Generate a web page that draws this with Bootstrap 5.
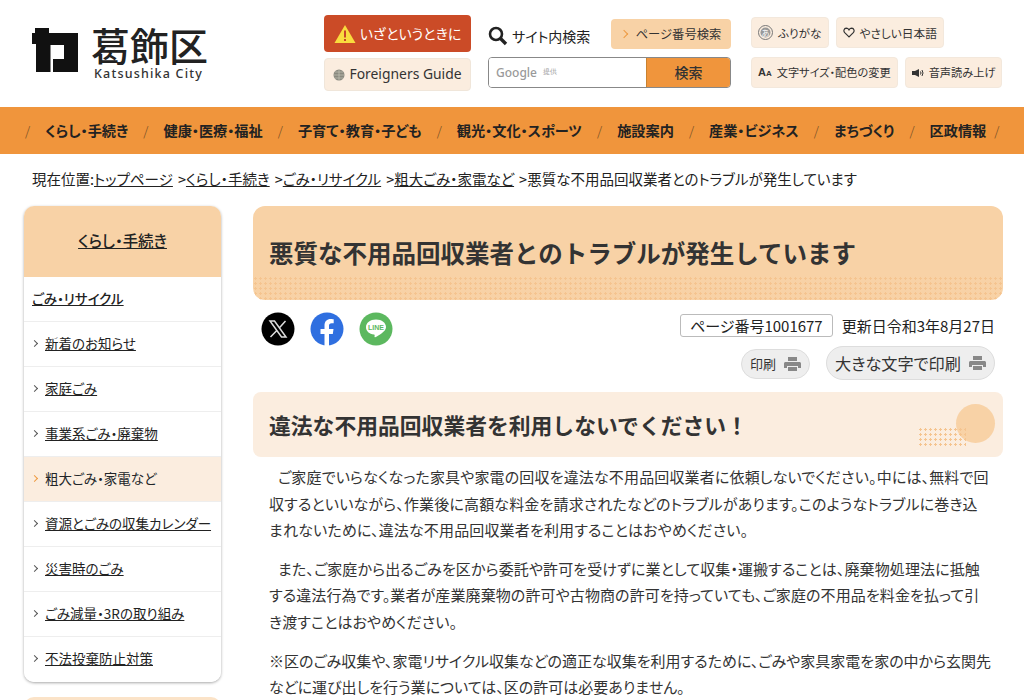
<!DOCTYPE html>
<html lang="ja">
<head>
<meta charset="UTF-8">
<meta name="viewport" content="width=device-width, initial-scale=1.0">
<title>悪質な不用品回収業者とのトラブルが発生しています</title>
<link href="https://cdn.jsdelivr.net/npm/bootstrap@5.3.0/dist/css/bootstrap.min.css" rel="stylesheet">
<style>
body { font-family: "Noto Sans CJK JP", "Noto Sans", sans-serif; font-feature-settings: "palt"; color: #222; font-size: 15px; background: #fff; }
a { color: #222; }
.site-head { height: 107px; padding: 15px 20px 0 32px; }
.logo-box { width: 292px; }
.logo-mark { margin-top: 13px; flex: none; }
.logo-kanji { font-size: 39px; line-height: 40px; font-weight: 500; color: #222; margin: 9px 0 0 13px; }
.logo-en { font-family: "Noto Sans", sans-serif; font-size: 12.5px; line-height: 14px; letter-spacing: 1.2px; color: #333; text-align: center; margin: 3px 0 0 11px; font-weight: 500; white-space: nowrap; }
.col-a { width: 147px; }
.col-b { width: 243px; margin-left: 17px; }
.col-c { margin-left: 20px; width: 253px; }
.btn-alert { background: #cb4b27; color: #fff; height: 37px; border-radius: 4px; font-size: 14px; }
.btn-foreign { background: #fbeddf; border: 1px solid #f0e6da; height: 33px; margin-top: 6px; border-radius: 4px; font-family: "Noto Sans", sans-serif; font-size: 13.9px; color: #333; }
.search-label { font-size: 14px; }
.btn-pageno { background: #f8d2a6; border-radius: 4px; height: 30px; width: 120px; font-size: 12.3px; color: #333; margin-top: 4px; }
.pageno-arrow { width: 6px; height: 6px; border-top: 1px solid #ee9a40; border-right: 1px solid #ee9a40; transform: rotate(45deg); margin-right: 9px; }
.search-box { height: 31px; border: 1px solid #888; border-radius: 4px; overflow: hidden; margin-top: 8px; }
.search-field { flex: 1; background: #fff; color: #999; font-family: "Noto Sans", sans-serif; font-size: 12px; font-weight: 500; padding-left: 7px; }
.search-field small { font-size: 7px; margin-left: 6px; }
.search-go { width: 84px; background: #f0953c; font-size: 14px; font-weight: 500; color: #333; border-left: 1px solid #c9822f; }
.btn-tool { background: #fbeddf; border: 1px solid #f3e8dc; border-radius: 4px; height: 31px; font-size: 11.7px; color: #333; padding: 0 6px; white-space: nowrap; gap: 5px; }
.btn-tool-sm { font-size: 11.2px; }
.tool-row-a { margin-top: 2px; gap: 7px; }
.tool-row-b { margin-top: 9px; gap: 7px; }
.tool-aa { font-weight: 700; font-family: "Liberation Sans", sans-serif; font-size: 11px; }
.tool-aa small { font-size: 8px; font-weight: 700; }
.main-nav { background: #f0953c; height: 47px; font-size: 14.2px; font-weight: 700; padding-left: 25px; flex-wrap: nowrap; white-space: nowrap; }
.main-nav .nav-item { margin-right: 15px; }
.main-nav .nav-item::before { content: "/"; font-weight: 300; color: #6b4a25; margin-right: 15px; font-size: 13px; }
.main-nav .nav-item:last-child::after { content: "/"; font-weight: 300; color: #6b4a25; margin-left: 8px; font-size: 13px; }
.main-nav .nav-item a { color: #222; text-decoration: none; }
.crumbs { padding: 15px 32px 0; height: 52px; font-size: 14.5px; line-height: 20px; }
.crumbs a { margin-right: 5px; }
.page-body { padding: 0 20px 0 24px; gap: 32px; }
.side-box { width: 197px; flex: none; border-radius: 10px; overflow: hidden; box-shadow: 0 1px 3px rgba(0,0,0,.35); }
.side-top { background: #f8d2a6; height: 71px; font-size: 15.4px; font-weight: 500; padding-bottom: 2px; }
.side-list .list-group-item { height: 45px; padding: 0 8px 2px; font-size: 13.5px; border-color: #eee; display: flex; align-items: center; }
.side-list .side-first { font-weight: 500; }
.side-list .side-here { background: #fbeddf; }
.side-arrow { width: 5px; height: 5px; flex: none; border-top: 1px solid #555; border-right: 1px solid #555; transform: rotate(45deg); margin-right: 8px; }
.side-here .side-arrow { border-color: #ee9a40; }
.side-next { width: 197px; height: 40px; background: #fbe3c8; border-radius: 10px; margin-top: 15px; }
.main-col { width: 750px; flex: none; }
.title-box { background: #f8d2a6; border-radius: 12px; height: 94px; position: relative; padding-left: 16px; margin: 0; font-size: 24.5px; font-weight: 700; line-height: 94px; color: #333; overflow: hidden; font-feature-settings: normal; }
.title-box::after { content: ""; position: absolute; left: 0; right: 0; bottom: 0; height: 24px; background-image: radial-gradient(#f5c48f 1px, transparent 1.2px); background-size: 5px 5px; }
.share-row { height: 92px; }
.share-icons { padding: 12px 0 0 8px; gap: 15px; }
.meta-box { padding: 14px 8px 0 0; }
.page-no { border: 1px solid #bbb; border-radius: 3px; height: 23px; padding: 0 9px; font-size: 15px; line-height: 21px; margin-right: 9px; }
.meta-date { font-size: 15px; line-height: 23px; }
.btn-print { background: #eee; border: 1px solid #ddd; border-radius: 17px; height: 30px; font-size: 13px; color: #333; padding: 0 8px; margin-top: 12px; }
.btn-print-big { height: 34px; font-size: 16.2px; border-radius: 18px; margin-left: 16px; margin-top: 9px; }
.sub-title { background: #fbeddf; border-radius: 8px; height: 65px; position: relative; padding-left: 16px; margin: 0 0 7px; font-size: 21.8px; font-weight: 700; line-height: 65px; color: #333; font-feature-settings: normal; }
.sub-dots { position: absolute; left: 665px; top: 35px; width: 48px; height: 20px; background-image: radial-gradient(#f5c48f 1px, transparent 1.2px); background-size: 5px 5px; }
.sub-ball { position: absolute; left: 703px; top: 12px; width: 39px; height: 39px; border-radius: 50%; background: #f8d2a6; }
.main-text { padding: 0 0 0 16px; font-size: 15px; line-height: 26.6px; color: #333; white-space: nowrap; }
.main-text p { margin: 0 0 12px; }
.main-text .para-in { text-indent: 9px; }
.para-a { letter-spacing: .15px; }
.para-b { letter-spacing: .1px; }
</style>
</head>
<body>
<header class="site-head d-flex">
  <div class="logo-box d-flex">
    <svg class="logo-mark" width="46" height="44" viewBox="0 0 46 44"><path fill="#111" d="M3 0H17V5H46V44H21V31H32V17H18.500V44H4V16H0V5H3z"/></svg>
    <div>
      <div class="logo-kanji">葛飾区</div>
      <div class="logo-en">Katsushika City</div>
    </div>
  </div>
  <div class="col-a">
    <a href="#" class="btn-alert d-flex align-items-center justify-content-center gap-1 text-decoration-none">
      <svg width="22" height="20" viewBox="0 0 22 20"><path fill="#f9dc3e" d="M11 1l10.500 18H.5z"/><rect x="10" y="6.500" width="2" height="7" fill="#c8452a"/><rect x="10" y="15" width="2" height="2" fill="#c8452a"/></svg>
      いざというときに
    </a>
    <a href="#" class="btn-foreign d-flex align-items-center justify-content-center gap-1 text-decoration-none">
      <svg width="12" height="12" viewBox="0 0 12 12"><circle cx="6" cy="6" r="5.500" fill="#8a8a80"/><path d="M1 6h10M6 1v10M2 3h8M2 9h8" stroke="#c4c4b8" stroke-width=".7"/></svg>
      Foreigners Guide
    </a>
  </div>
  <div class="col-b">
    <div class="d-flex justify-content-between">
      <div class="search-label d-flex align-items-center gap-1 pt-2">
        <svg width="20" height="20" viewBox="0 0 20 20" fill="none" stroke="#222" stroke-width="2.600"><circle cx="8" cy="8" r="6"/><path d="M12.500 12.500L18 18" stroke-width="3.400"/></svg>
        サイト内検索
      </div>
      <a href="#" class="btn-pageno d-flex align-items-center justify-content-center text-decoration-none"><span class="pageno-arrow"></span>ページ番号検索</a>
    </div>
    <div class="search-box d-flex">
      <div class="search-field d-flex align-items-center">Google<small>提供</small></div>
      <div class="search-go d-flex align-items-center justify-content-center">検索</div>
    </div>
  </div>
  <div class="col-c">
    <div class="d-flex tool-row-a">
      <a href="#" class="btn-tool d-flex align-items-center text-decoration-none">
        <svg width="15" height="15" viewBox="0 0 15 15"><circle cx="7.500" cy="7.500" r="7" fill="none" stroke="#777"/><circle cx="7.500" cy="7.500" r="5" fill="#999"/><text x="7.500" y="10.500" text-anchor="middle" font-size="8" fill="#fff">あ</text></svg>
        ふりがな
      </a>
      <a href="#" class="btn-tool d-flex align-items-center text-decoration-none">
        <svg width="12" height="11" viewBox="0 0 13 12"><path fill="none" stroke="#333" stroke-width="1.300" d="M6.500 10.800L1.800 6.200C.2 4.500 1 1.500 3.500 1.300c1.300 0 2.300.7 3 1.800.7-1.100 1.700-1.800 3-1.800 2.500.2 3.300 3.200 1.700 4.900z"/></svg>
        やさしい日本語
      </a>
    </div>
    <div class="d-flex tool-row-b">
      <a href="#" class="btn-tool btn-tool-sm d-flex align-items-center text-decoration-none">
        <span class="tool-aa">A<small>A</small></span>
        文字サイズ・配色の変更
      </a>
      <a href="#" class="btn-tool btn-tool-sm d-flex align-items-center text-decoration-none">
        <svg width="12" height="10" viewBox="0 0 12 10"><path fill="#333" d="M0 3h3l4-2v8L3 7H0z"/><path stroke="#333" fill="none" d="M8.500 3.500q1 1.500 0 3M10 2q2 3 0 6"/></svg>
        音声読み上げ
      </a>
    </div>
  </div>
</header>

<nav>
  <ul class="nav main-nav align-items-center">
    <li class="nav-item"><a href="#">くらし・手続き</a></li>
    <li class="nav-item"><a href="#">健康・医療・福祉</a></li>
    <li class="nav-item"><a href="#">子育て・教育・子ども</a></li>
    <li class="nav-item"><a href="#">観光・文化・スポーツ</a></li>
    <li class="nav-item"><a href="#">施設案内</a></li>
    <li class="nav-item"><a href="#">産業・ビジネス</a></li>
    <li class="nav-item"><a href="#">まちづくり</a></li>
    <li class="nav-item"><a href="#">区政情報</a></li>
  </ul>
</nav>

<div class="crumbs">現在位置:<a href="#">トップページ</a>&gt;<a href="#">くらし・手続き</a>&gt;<a href="#">ごみ・リサイクル</a>&gt;<a href="#">粗大ごみ・家電など</a>&gt;悪質な不用品回収業者とのトラブルが発生しています</div>

<div class="page-body d-flex align-items-start">
  <aside>
    <div class="side-box">
      <div class="side-top d-flex align-items-center justify-content-center"><a href="#">くらし・手続き</a></div>
      <div class="list-group list-group-flush side-list">
        <div class="list-group-item side-first"><a href="#">ごみ・リサイクル</a></div>
        <div class="list-group-item"><span class="side-arrow"></span><a href="#">新着のお知らせ</a></div>
        <div class="list-group-item"><span class="side-arrow"></span><a href="#">家庭ごみ</a></div>
        <div class="list-group-item"><span class="side-arrow"></span><a href="#">事業系ごみ・廃棄物</a></div>
        <div class="list-group-item side-here"><span class="side-arrow"></span>粗大ごみ・家電など</div>
        <div class="list-group-item"><span class="side-arrow"></span><a href="#">資源とごみの収集カレンダー</a></div>
        <div class="list-group-item"><span class="side-arrow"></span><a href="#">災害時のごみ</a></div>
        <div class="list-group-item"><span class="side-arrow"></span><a href="#">ごみ減量・3Rの取り組み</a></div>
        <div class="list-group-item"><span class="side-arrow"></span><a href="#">不法投棄防止対策</a></div>
      </div>
    </div>
    <div class="side-next"></div>
  </aside>
  <main class="main-col">
    <h1 class="title-box">悪質な不用品回収業者とのトラブルが発生しています</h1>
    <div class="share-row d-flex justify-content-between">
      <div class="share-icons d-flex align-items-start">
        <svg width="34" height="34" viewBox="0 0 34 34"><circle cx="17" cy="17" r="16.500" fill="#000"/><path fill="none" stroke="#ddd" stroke-width="1.500" d="M9 9h4.500l11.500 16h-4.500zM24.500 9l-6.500 7.200M15.800 18.500L9.500 25"/></svg>
        <svg width="34" height="34" viewBox="0 0 34 34"><circle cx="17" cy="17" r="16.500" fill="#2f6fe0"/><path fill="#fff" d="M14.500 34V22H10.500v-5h4v-3.500c0-4.200 2.500-6.500 6.200-6.500 1.500 0 3 .3 3 .3v4h-2c-2 0-2.700 1.200-2.700 2.500V17h4.500l-.7 5h-3.800v12z"/></svg>
        <svg width="34" height="34" viewBox="0 0 34 34"><circle cx="17" cy="17" r="16.500" fill="#5cb85f"/><path fill="#fff" d="M17 7.500c-5.800 0-10 3.300-10 7.700 0 3.900 3.300 6.700 8 7.400.9.200.7 1 .5 2-.1.800.5.800 1.200.4 2.500-1.500 10.300-5.500 10.300-9.800 0-4.400-4.200-7.700-10-7.700z"/><text x="17" y="18" text-anchor="middle" font-size="7" font-weight="700" fill="#5cb85f" font-family="Liberation Sans">LINE</text></svg>
      </div>
      <div class="meta-box">
        <div class="d-flex justify-content-end">
          <div class="page-no">ページ番号1001677</div>
          <div class="meta-date">更新日令和3年8月27日</div>
        </div>
        <div class="d-flex justify-content-end align-items-start">
          <a href="#" class="btn-print d-flex align-items-center gap-2 text-decoration-none">印刷
            <svg width="17" height="14" viewBox="0 0 17 14"><path fill="#888" d="M4 0h9v4H4zM1.500 5h14c.8 0 1.500.7 1.500 1.500V11h-3V9H3v2H0V6.500C0 5.700.7 5 1.500 5zM4 10h9v4H4z"/></svg>
          </a>
          <a href="#" class="btn-print btn-print-big d-flex align-items-center gap-2 text-decoration-none">大きな文字で印刷
            <svg width="17" height="14" viewBox="0 0 17 14"><path fill="#888" d="M4 0h9v4H4zM1.500 5h14c.8 0 1.500.7 1.500 1.500V11h-3V9H3v2H0V6.500C0 5.700.7 5 1.500 5zM4 10h9v4H4z"/></svg>
          </a>
        </div>
      </div>
    </div>
    <h2 class="sub-title">違法な不用品回収業者を利用しないでください！<span class="sub-ball"></span><span class="sub-dots"></span></h2>
    <div class="main-text">
      <p class="para-in para-a">ご家庭でいらなくなった家具や家電の回収を違法な不用品回収業者に依頼しないでください。中には、無料で回<br>収するといいながら、作業後に高額な料金を請求されたなどのトラブルがあります。このようなトラブルに巻き込<br>まれないために、違法な不用品回収業者を利用することはおやめください。</p>
      <p class="para-in para-b">また、ご家庭から出るごみを区から委託や許可を受けずに業として収集・運搬することは、廃棄物処理法に抵触<br>する違法行為です。業者が産業廃棄物の許可や古物商の許可を持っていても、ご家庭の不用品を料金を払って引<br>き渡すことはおやめください。</p>
      <p>※区のごみ収集や、家電リサイクル収集などの適正な収集を利用するために、ごみや家具家電を家の中から玄関先<br>などに運び出しを行う業については、区の許可は必要ありません。</p>
    </div>
  </main>
</div>
</body>
</html>
